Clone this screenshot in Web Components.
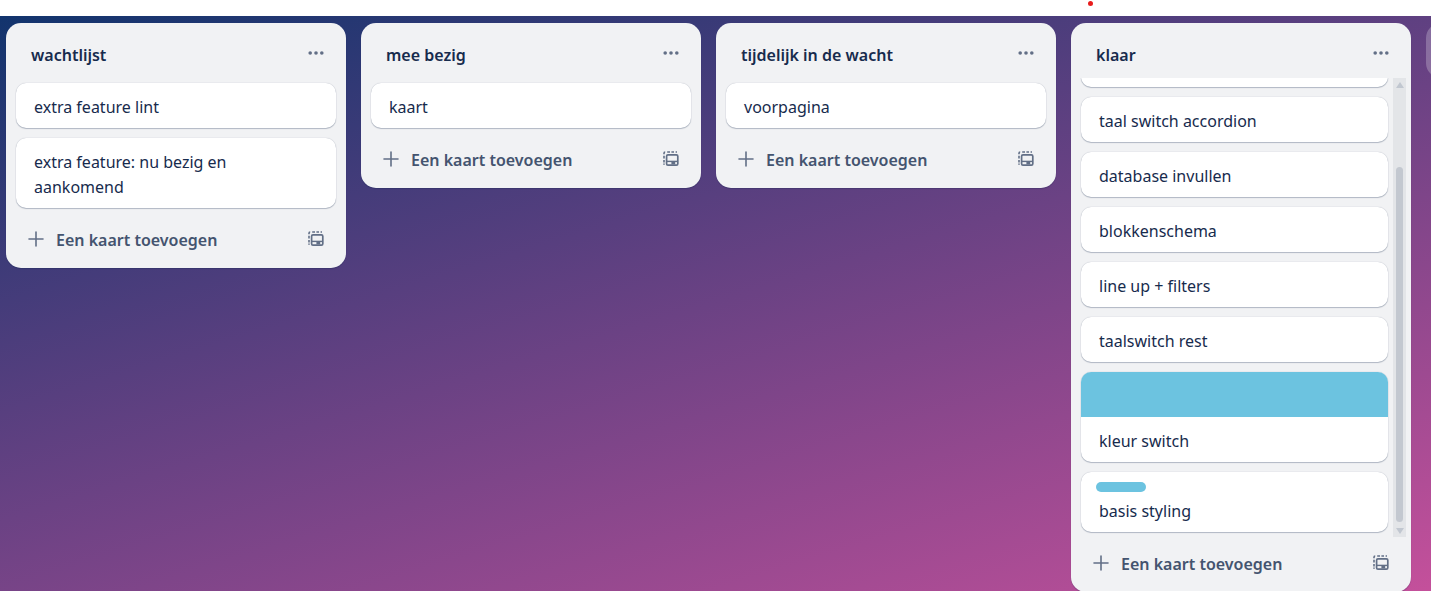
<!DOCTYPE html>
<html lang="nl">
<head>
<meta charset="utf-8">
<title>Bord</title>
<style>
  body { margin: 0; background: #fff; font-family: "Noto Sans", "Open Sans", sans-serif; font-size: 16px; line-height: 25px; color: #172b4d; overflow: hidden; }
</style>
</head>
<body>
<board-page>
  <board-list heading="wachtlijst">
    <board-card>extra feature lint</board-card>
    <board-card>extra feature: nu bezig en aankomend</board-card>
  </board-list>
  <board-list heading="mee bezig">
    <board-card>kaart</board-card>
  </board-list>
  <board-list heading="tijdelijk in de wacht">
    <board-card>voorpagina</board-card>
  </board-list>
  <board-list heading="klaar" scrolled>
    <board-card></board-card>
    <board-card>taal switch accordion</board-card>
    <board-card>database invullen</board-card>
    <board-card>blokkenschema</board-card>
    <board-card>line up + filters</board-card>
    <board-card>taalswitch rest</board-card>
    <board-card cover>kleur switch</board-card>
    <board-card label>basis styling</board-card>
  </board-list>
  <add-list></add-list>
</board-page>

<template id="page-template">
  <style>
    :host { display: flex; flex-direction: column; height: 100vh; }
    .strip { position: relative; flex: none; height: 16px; background: #fff; }
    .dot { position: absolute; left: 76%; top: 1px; width: 5px; height: 5px; border-radius: 50%; background: #e81c1c; }
    main { flex: 1; min-height: 0; box-sizing: border-box; display: flex; align-items: flex-start; gap: 15px; padding: 7px 6px 0; overflow: hidden;
      background: linear-gradient(163deg, #12346d, #c4509b); }
  </style>
  <div class="strip"><span class="dot"></span></div>
  <main><slot></slot></main>
</template>

<template id="list-template">
  <style>
    :host { flex: none; display: flex; flex-direction: column; box-sizing: border-box; width: 340px; max-height: calc(100% + 1px); border-radius: 15px; background: #f1f2f4; box-shadow: 0 1px 1px #091e4240; }
    header, footer { flex: none; display: flex; align-items: center; justify-content: space-between; height: 55px; box-sizing: border-box; }
    header { padding: 10px 20px 0 25px; }
    footer { padding: 0 20px; }
    h2 { margin: 0; font-size: inherit; font-weight: 600; }
    button { display: flex; align-items: center; padding: 0; border: 0; background: none; font: inherit; color: #44546f; cursor: pointer; }
    .add { gap: 10px; font-weight: 600; }
    svg { display: block; color: #626f86; }
    .body { display: flex; min-height: 0; }
    .cards { flex: 1; min-width: 0; display: flex; flex-direction: column; justify-content: flex-end; gap: 10px; padding: 5px 10px; overflow: hidden; box-sizing: border-box; }
    .bar { display: none; flex: none; width: 13px; margin-right: 5px; background: #e3e5e8; flex-direction: column; align-items: center; justify-content: space-between; padding: 4px 0 3px; box-sizing: border-box; }
    :host([scrolled]) .bar { display: flex; }
    :host([scrolled]) .cards { padding-right: 5px; }
    .bar svg { flex: none; color: #c1c7d0; }
    .track { flex: 1; display: flex; flex-direction: column; padding: 4px 0 6px; }
    .rest { flex: 75; }
    .thumb { flex: 355; width: 7px; border-radius: 4px; background: #c3c8d0; }
  </style>
  <header>
    <h2></h2>
    <button type="button" aria-label="Lijstacties"><svg width="20" height="20" viewBox="0 0 20 20" fill="currentColor"><circle cx="4.2" cy="7" r="1.8"/><circle cx="10" cy="7" r="1.8"/><circle cx="15.8" cy="7" r="1.8"/></svg></button>
  </header>
  <div class="body">
    <div class="cards"><slot></slot></div>
    <div class="bar" aria-hidden="true">
      <svg width="8" height="6" viewBox="0 0 8 6"><path d="M4 0 8 6H0z" fill="currentColor"/></svg>
      <div class="track"><div class="rest"></div><div class="thumb"></div></div>
      <svg width="8" height="6" viewBox="0 0 8 6"><path d="M4 6 8 0H0z" fill="currentColor"/></svg>
    </div>
  </div>
  <footer>
    <button type="button" class="add"><svg width="20" height="20" viewBox="0 0 20 20" fill="none" stroke="currentColor" stroke-width="1.6" stroke-linecap="round"><path d="M10 1v14M3 8h14"/></svg><span>Een kaart toevoegen</span></button>
    <button type="button" aria-label="Maken van sjabloon"><svg width="20" height="20" viewBox="0 0 20 20" fill="none" stroke="currentColor" stroke-width="1.7"><rect x="5.6" y="3.8" width="11.2" height="10.4" rx="1.4"/><path d="M5.6 10.4H16.8" stroke-width="1.4"/><path d="M10.4 10.6h3.8v2.8h-3.8z" fill="currentColor" stroke="none"/><path d="M3 3.2V2.2q0-1.2 1.2-1.2M6.2 1h2.8M10.4 1H13M14.6 1h1.4M3 4.8v2.6M3 9v2.4M3 12.6v1.2" stroke-width="1.6"/></svg></button>
  </footer>
</template>

<template id="card-template">
  <style>
    :host { flex: none; display: block; }
    a { display: block; border-radius: 10px; overflow: hidden; background: #fff; color: inherit; text-decoration: none; box-shadow: 0 1px 1px #091e4240, 0 0 1px #091e424f; }
    .text { display: block; min-height: 25px; padding: 12px 18px 8px; }
    .cover, .label { display: none; background: #6cc3e0; }
    :host([cover]) .cover { display: block; height: 45px; }
    :host([label]) a { padding-top: 10px; }
    :host([label]) .label { display: block; width: 50px; height: 10px; margin-left: 15px; border-radius: 5px; }
    :host([label]) .text { padding-top: 7px; }
  </style>
  <a href="#"><span class="cover"></span><span class="label"></span><span class="text"><slot></slot></span></a>
</template>

<template id="add-template">
  <style>
    :host { flex: none; display: block; width: 340px; }
    button { display: block; width: 100%; height: 55px; border: 0; border-radius: 15px; background: #ffffff3d; }
  </style>
  <button type="button" aria-label="Lijst toevoegen"></button>
</template>

<script>
  class TemplateElement extends HTMLElement {
    constructor() {
      super();
      this.attachShadow({ mode: "open" })
        .append(document.getElementById(this.constructor.template).content.cloneNode(true));
    }
  }
  class BoardPage extends TemplateElement { static template = "page-template"; }
  class BoardCard extends TemplateElement { static template = "card-template"; }
  class AddList extends TemplateElement { static template = "add-template"; }
  class BoardList extends TemplateElement {
    static template = "list-template";
    connectedCallback() {
      this.shadowRoot.querySelector("h2").textContent = this.getAttribute("heading");
    }
  }
  customElements.define("board-page", BoardPage);
  customElements.define("board-list", BoardList);
  customElements.define("board-card", BoardCard);
  customElements.define("add-list", AddList);
</script>
</body>
</html>
